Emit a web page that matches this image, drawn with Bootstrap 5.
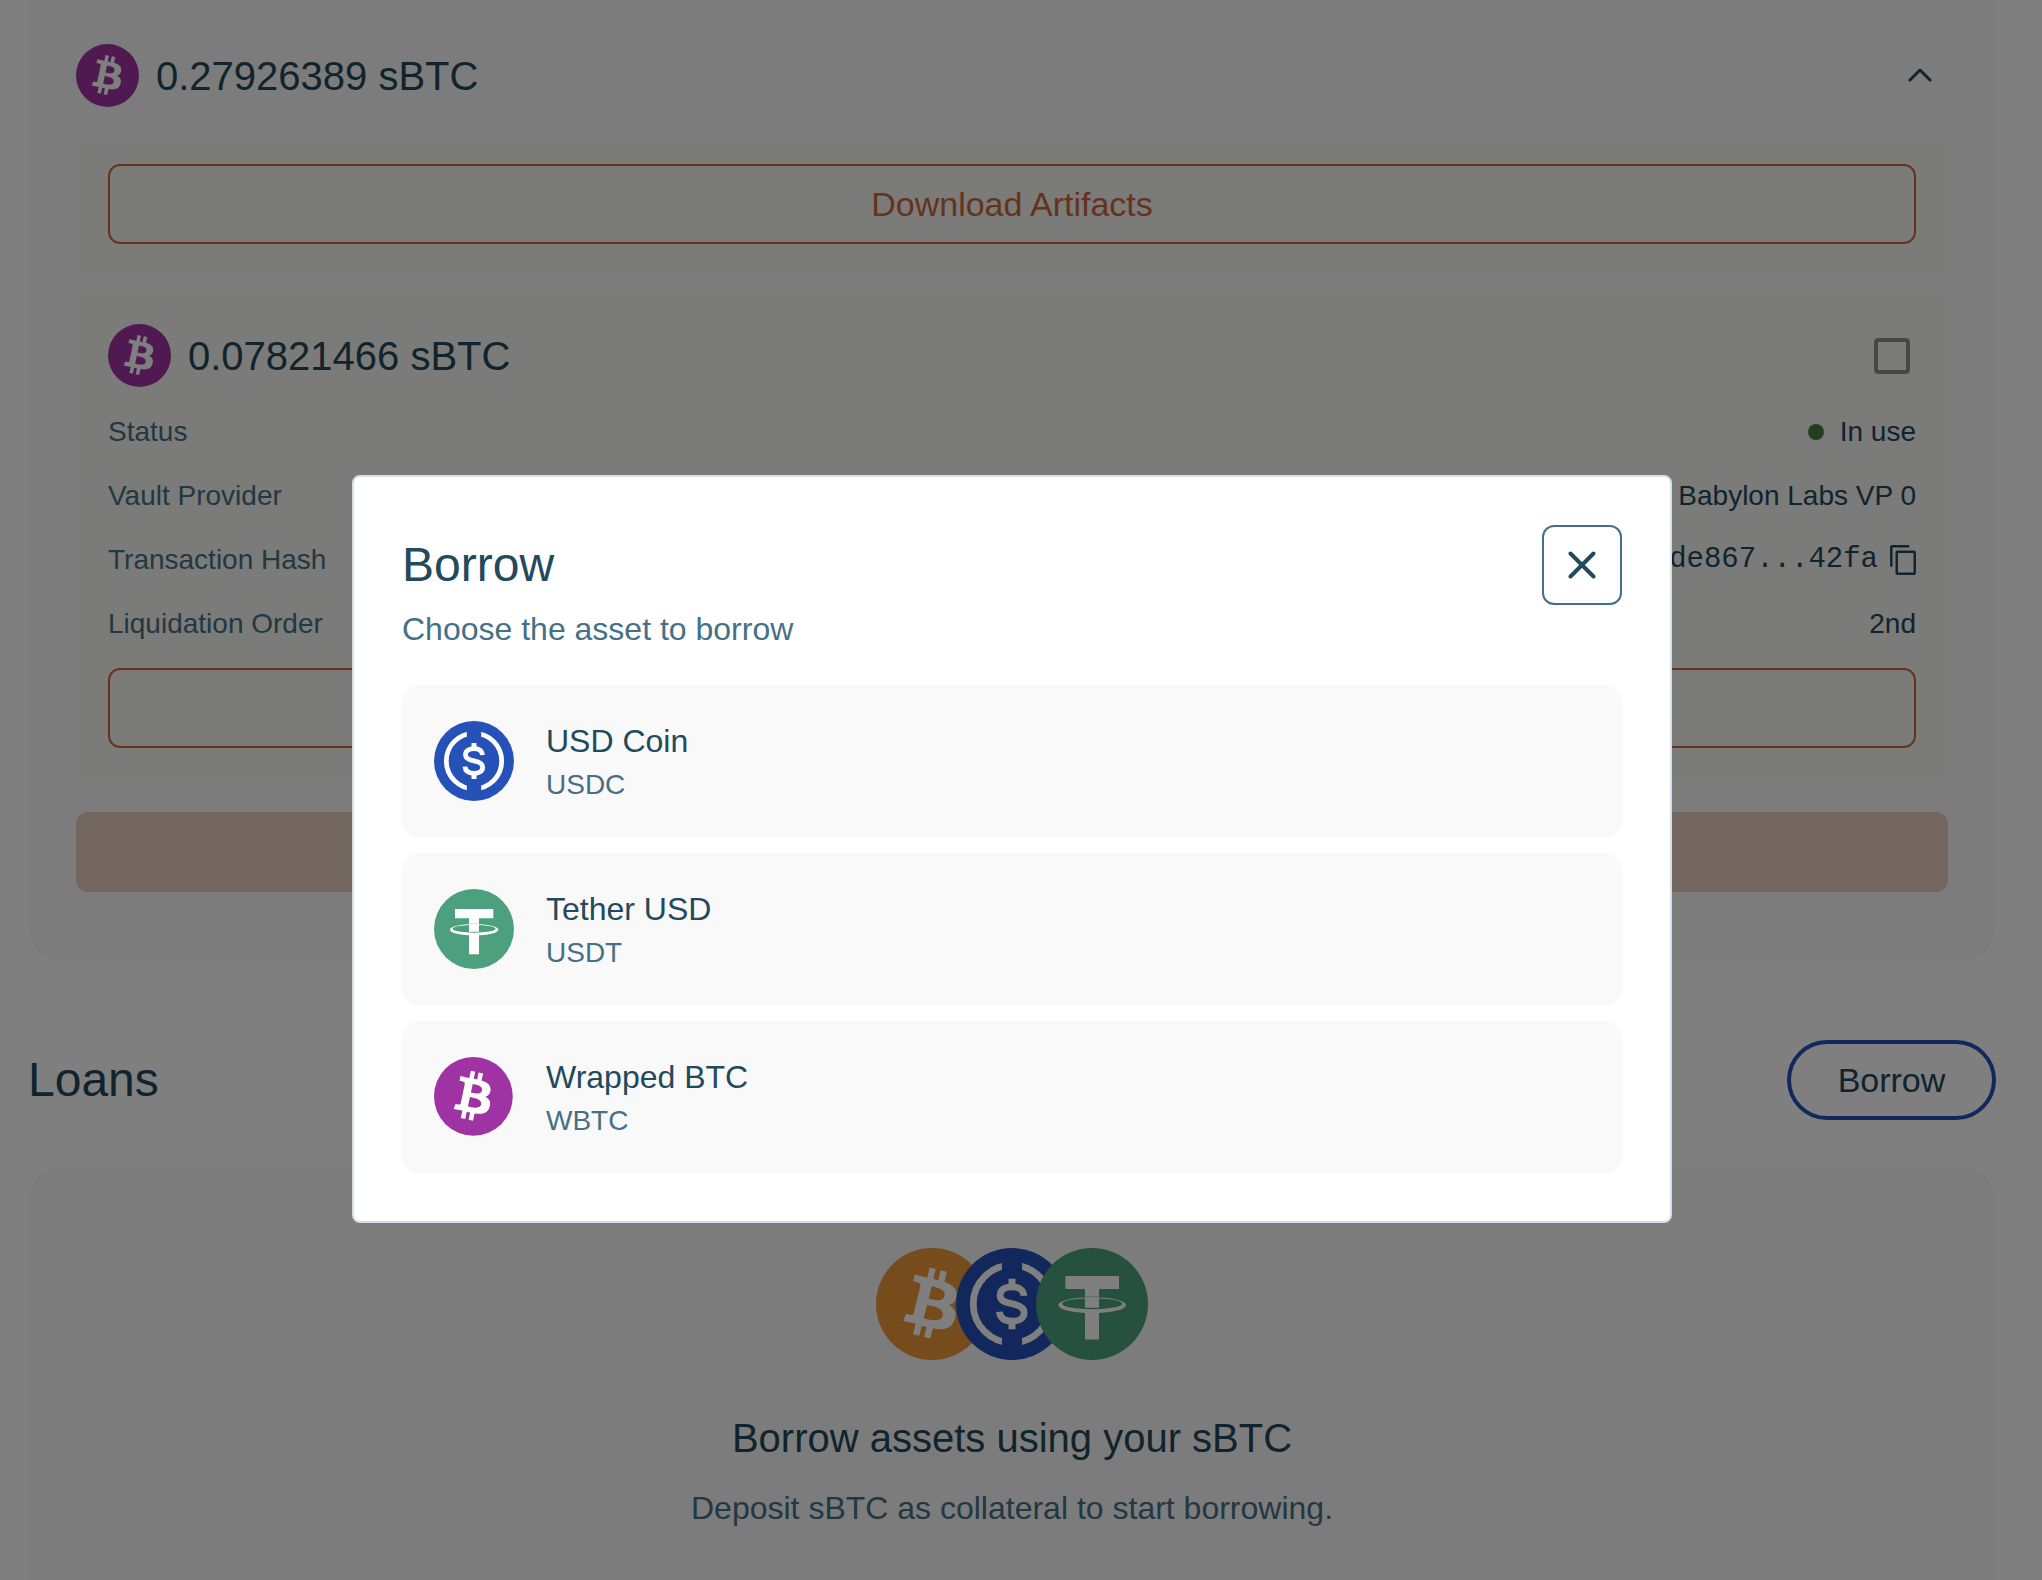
<!DOCTYPE html>
<html lang="en">
<head>
<meta charset="utf-8">
<meta name="viewport" content="width=device-width, initial-scale=1">
<title>Borrow</title>
<link href="https://cdn.jsdelivr.net/npm/bootstrap@5.3.0/dist/css/bootstrap.min.css" rel="stylesheet">
<style>
  :root { --ink: #23495c; --ink-soft: #467085; --accent: #cb673a; --usdc: #2551b8; }
  body { font-family: "Liberation Sans", Arial, sans-serif; font-size: 28px; line-height: 40px; color: var(--ink); background: #fff; overflow: hidden; }
  .page-shell { padding: 0 46px 0 28px; }
  .panel { background: #f9f9f9; }
  .panel-collateral { padding: 44px 48px 68px; border-radius: 0 0 32px 32px; }
  .panel-loans { margin-top: 48px; padding: 80px 48px; border-radius: 32px; }
  .vault-box { background: #f7f7f2; padding: 32px; border-radius: 16px; }
  .vault-box-tail { padding-top: 24px; border-radius: 0 0 16px 16px; }
  .gap-above { margin-top: 32px; }
  .section-head { margin-top: 80px; }
  .amount { font-size: 40px; line-height: 64px; font-weight: 400; }
  .heading-xl { font-size: 48px; line-height: 80px; font-weight: 400; }
  .heading-lg { font-size: 40px; line-height: 60px; font-weight: 400; }
  .text-md { font-size: 32px; line-height: 48px; }
  .text-soft { color: var(--ink-soft); }
  .coin { display: block; flex: none; width: 64px; height: 64px; }
  .coin-md { width: 80px; height: 80px; }
  .coin-lg { width: 112px; height: 112px; }
  .coin-lg + .coin-lg { margin-left: -32px; }
  .btn-tall { height: 80px; font-size: 34px; line-height: 40px; border-radius: 12px; padding: 0 44px; }
  .btn-line { border: 2px solid var(--accent); color: var(--accent); }
  .btn-solid, .btn-solid:disabled { background: #e8cfc1; color: #fff; border: 0; opacity: 1; }
  .btn-round { border: 4px solid var(--usdc); border-radius: 40px; color: var(--ink); min-width: 209px; }
  .btn-bare { border: 0; padding: 0; background: none; color: inherit; line-height: 0; }
  .facts { gap: 24px; }
  .dot { width: 16px; height: 16px; border-radius: 50%; background: #467d3c; }
  .hash { font-family: "Liberation Mono", monospace; font-size: 29px; }
  .pick { appearance: none; width: 36px; height: 36px; border: 4px solid #8f8f8f; border-radius: 4px; background: transparent; margin: 0 6px 0 0; }
  .toggle { margin-right: 16px; }
  .modal { padding-right: 18px; overflow: hidden; }
  .modal-dialog { max-width: 1320px; margin: 475px auto 0; }
  .modal-content { color: var(--ink); background: #fff; border: 2px solid #d7dfe6; border-radius: 8px; padding: 48px; }
  .close-box { width: 80px; height: 80px; border: 2px solid var(--ink-soft); border-radius: 12px; color: var(--ink); padding: 0; }
  .asset { background: #f9f9f9; border: 0; border-radius: 16px; padding: 32px; gap: 32px; color: var(--ink); }
</style>
<script src="https://cdn.jsdelivr.net/npm/bootstrap@5.3.0/dist/js/bootstrap.bundle.min.js"></script>
</head>
<body class="modal-open">

<svg class="d-none" aria-hidden="true">
  <symbol id="btc-mark" viewBox="0 0 32 32">
    <path fill="#fff" fill-rule="evenodd" d="M23.189 14.02c.314-2.096-1.283-3.223-3.465-3.975l.708-2.84-1.728-.43-.69 2.765c-.454-.114-.92-.22-1.385-.326l.695-2.783L15.596 6l-.708 2.839c-.376-.086-.746-.17-1.104-.26l.002-.009-2.384-.595-.46 1.846s1.283.294 1.256.312c.7.175.826.638.805 1.006l-.806 3.235c.048.012.11.03.18.057l-.183-.045-1.13 4.532c-.086.212-.303.531-.793.41.018.025-1.256-.313-1.256-.313l-.858 1.978 2.25.561c.418.105.828.215 1.231.318l-.715 2.872 1.727.43.708-2.84c.472.127.93.245 1.378.357l-.706 2.828 1.728.43.715-2.866c2.948.558 5.164.333 6.097-2.333.752-2.146-.037-3.385-1.588-4.192 1.13-.26 1.98-1.003 2.207-2.538zm-3.95 5.538c-.533 2.147-4.148.986-5.32.695l.95-3.805c1.172.293 4.929.872 4.37 3.11zm.535-5.569c-.487 1.953-3.495.96-4.47.717l.86-3.45c.975.243 4.118.696 3.61 2.733z"/>
  </symbol>
  <symbol id="coin-wbtc" viewBox="0 0 64 64">
    <circle cx="31.5" cy="31.5" r="31.5" fill="#a033a3"/>
    <g transform="rotate(-2 31 31)"><use href="#btc-mark" x="-1" y="-1" width="64" height="64"/></g>
  </symbol>
  <symbol id="coin-btc" viewBox="0 0 64 64">
    <circle cx="32" cy="32" r="32" fill="#ec983a"/>
    <use href="#btc-mark" x="-1" y="-1" width="65" height="65"/>
  </symbol>
  <symbol id="coin-usdc" viewBox="0 0 80 80">
    <circle cx="40" cy="40" r="40" fill="#2551b8"/>
    <circle cx="40" cy="40" r="27.7" fill="none" stroke="#fff" stroke-width="4.8"/>
    <rect x="32.8" y="8" width="14.4" height="64" fill="#2551b8"/>
    <path d="M48.5 34.2C48.2 30 45 27.7 40 27.7C35 27.7 31.5 30 31.5 33.7C31.5 37.5 34.5 38.8 40 39.8C45.5 40.8 48.7 42.5 48.7 46.2C48.7 50 45 52.3 40 52.3C34.5 52.3 31.3 49.8 31 45.6" fill="none" stroke="#fff" stroke-width="4.8"/>
    <path d="M40 22v6M40 52v6" stroke="#fff" stroke-width="5"/>
  </symbol>
  <symbol id="coin-usdt" viewBox="0 0 80 80">
    <circle cx="40" cy="40" r="40" fill="#4da07e"/>
    <path fill="#fff" d="M21 20h38.300v9.300H45v13.400H35V29.300H21zM35 44.500h10v20.800H35z"/>
    <path fill="#fff" fill-rule="evenodd" d="M15.900 40.800a24.200 5.700 0 1 0 48.400 0a24.200 5.700 0 1 0-48.400 0zM18.600 39.800a21.500 3.900 0 1 0 43 0a21.500 3.900 0 1 0-43 0z"/>
    <path fill="none" stroke="#4da07e" stroke-width=".3" d="M35 34.900q5-.3 10 0"/>
  </symbol>
</svg>

<main class="page-shell">
  <section class="panel panel-collateral">
    <div class="d-flex align-items-center gap-3">
      <svg class="coin" aria-hidden="true"><use href="#coin-wbtc"/></svg>
      <h2 class="amount m-0 flex-grow-1">0.27926389 sBTC</h2>
      <button type="button" class="btn-bare toggle" aria-label="Collapse">
        <svg width="24" height="16" viewBox="0 0 24 16" fill="none" stroke="currentColor" stroke-width="3" stroke-linecap="round" stroke-linejoin="round"><path d="M2 12l10-10 10 10"/></svg>
      </button>
    </div>

    <div class="vault-box vault-box-tail gap-above">
      <button type="button" class="btn btn-tall btn-line w-100">Download Artifacts</button>
    </div>

    <article class="vault-box mt-3">
      <div class="d-flex align-items-center gap-3 mb-4">
        <svg class="coin" aria-hidden="true"><use href="#coin-wbtc"/></svg>
        <h3 class="amount m-0 flex-grow-1">0.07821466 sBTC</h3>
        <input type="checkbox" class="pick" aria-label="Select 0.07821466 sBTC">
      </div>
      <div class="facts d-flex flex-column mb-4">
        <div class="d-flex justify-content-between"><span class="text-soft">Status</span><span class="d-flex align-items-center gap-3"><i class="dot"></i>In use</span></div>
        <div class="d-flex justify-content-between"><span class="text-soft">Vault Provider</span><span>Babylon Labs VP 0</span></div>
        <div class="d-flex justify-content-between"><span class="text-soft">Transaction Hash</span>
          <span class="d-flex align-items-center gap-2"><span class="hash">0xde867...42fa</span>
            <button type="button" class="btn-bare ms-1" aria-label="Copy hash"><svg width="26" height="30" viewBox="2 1 19 22" fill="currentColor"><path d="M16 1H3.500C2.700 1 2 1.700 2 2.500V17h1.800V2.800H16V1zm3.500 4H7.500C6.700 5 6 5.700 6 6.500v15c0 .8.7 1.500 1.500 1.500h12c.8 0 1.500-.7 1.500-1.500v-15c0-.8-.7-1.500-1.500-1.500zm-.3 16.200H7.800V6.800h11.400v14.400z"/></svg></button></span></div>
        <div class="d-flex justify-content-between"><span class="text-soft">Liquidation Order</span><span>2nd</span></div>
      </div>
      <button type="button" class="btn btn-tall btn-line w-100">Download Artifacts</button>
    </article>

    <button type="button" class="btn btn-tall btn-solid gap-above w-100" disabled>Withdraw</button>
  </section>

  <div class="section-head d-flex justify-content-between align-items-center">
    <h2 class="heading-xl m-0">Loans</h2>
    <button type="button" class="btn btn-tall btn-round">Borrow</button>
  </div>

  <section class="panel panel-loans text-center">
    <div class="d-flex justify-content-center mb-5">
      <svg class="coin coin-lg" aria-hidden="true"><use href="#coin-btc"/></svg>
      <svg class="coin coin-lg" aria-hidden="true"><use href="#coin-usdc"/></svg>
      <svg class="coin coin-lg" aria-hidden="true"><use href="#coin-usdt"/></svg>
    </div>
    <h3 class="heading-lg mb-3">Borrow assets using your sBTC</h3>
    <p class="text-md text-soft m-0">Deposit sBTC as collateral to start borrowing.</p>
  </section>
</main>

<div class="modal-backdrop show"></div>
<div class="modal show d-block" role="dialog" aria-modal="true" aria-labelledby="borrow-title">
  <div class="modal-dialog">
    <div class="modal-content">
      <div class="d-flex justify-content-between">
        <h1 class="heading-xl m-0" id="borrow-title">Borrow</h1>
        <button type="button" class="btn close-box d-flex align-items-center justify-content-center" aria-label="Close">
          <svg width="28" height="28" viewBox="0 0 28 28" stroke="currentColor" stroke-width="4" stroke-linecap="round"><path d="M2.500 2.500l23 23M25.500 2.500l-23 23"/></svg>
        </button>
      </div>
      <p class="text-md text-soft m-0">Choose the asset to borrow</p>
      <div class="gap-above d-flex flex-column gap-3">
        <button type="button" class="asset d-flex align-items-center text-start w-100">
          <svg class="coin coin-md" aria-hidden="true"><use href="#coin-usdc"/></svg>
          <span><span class="text-md d-block">USD Coin</span><span class="text-soft d-block">USDC</span></span>
        </button>
        <button type="button" class="asset d-flex align-items-center text-start w-100">
          <svg class="coin coin-md" aria-hidden="true"><use href="#coin-usdt"/></svg>
          <span><span class="text-md d-block">Tether USD</span><span class="text-soft d-block">USDT</span></span>
        </button>
        <button type="button" class="asset d-flex align-items-center text-start w-100">
          <svg class="coin coin-md" aria-hidden="true"><use href="#coin-wbtc"/></svg>
          <span><span class="text-md d-block">Wrapped BTC</span><span class="text-soft d-block">WBTC</span></span>
        </button>
      </div>
    </div>
  </div>
</div>
</body>
</html>
